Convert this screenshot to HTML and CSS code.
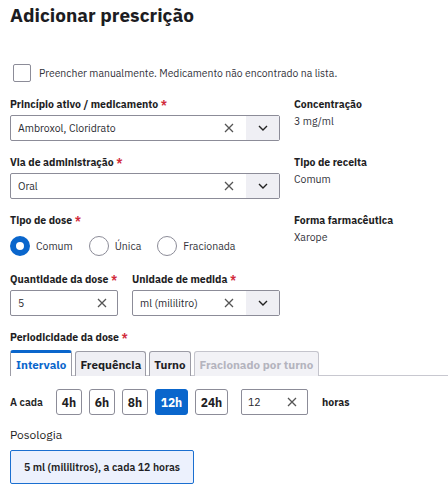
FILE: index.html
```html
<!DOCTYPE html>
<html lang="pt-BR">
<head>
<meta charset="utf-8">
<title>Adicionar prescrição</title>
<link rel="stylesheet" href="styles.css">
</head>
<body>
<div class="page">
  <h1 class="title">Adicionar prescrição</h1>

  <label class="check-row">
    <span class="checkbox"></span>
    <span class="check-text">Preencher manualmente. Medicamento não encontrado na lista.</span>
  </label>

  <div class="form-grid">
    <div class="field">
      <div class="label">Princípio ativo / medicamento <span class="req">*</span></div>
      <div class="input">
        <span class="input-text">Ambroxol, Cloridrato</span>
        <span class="clear"><svg viewBox="0 0 10 10" width="10" height="10"><path d="M1 1L9 9M9 1L1 9" stroke="#555" stroke-width="1.3" fill="none"/></svg></span>
        <span class="drop"><svg viewBox="0 0 10 6" width="10" height="6"><path d="M1 1L5 5L9 1" stroke="#222" stroke-width="1.4" fill="none"/></svg></span>
      </div>
    </div>
    <div class="info">
      <div class="label">Concentração</div>
      <div class="value">3 mg/ml</div>
    </div>

    <div class="field">
      <div class="label">Via de administração <span class="req">*</span></div>
      <div class="input">
        <span class="input-text">Oral</span>
        <span class="clear"><svg viewBox="0 0 10 10" width="10" height="10"><path d="M1 1L9 9M9 1L1 9" stroke="#555" stroke-width="1.3" fill="none"/></svg></span>
        <span class="drop"><svg viewBox="0 0 10 6" width="10" height="6"><path d="M1 1L5 5L9 1" stroke="#222" stroke-width="1.4" fill="none"/></svg></span>
      </div>
    </div>
    <div class="info">
      <div class="label">Tipo de receita</div>
      <div class="value">Comum</div>
    </div>

    <div class="field dose">
      <div class="label">Tipo de dose <span class="req">*</span></div>
      <div class="radios">
        <span class="radio-item"><span class="radio checked"></span>Comum</span>
        <span class="radio-item"><span class="radio"></span>Única</span>
        <span class="radio-item"><span class="radio"></span>Fracionada</span>
      </div>
    </div>
    <div class="info">
      <div class="label">Forma farmacêutica</div>
      <div class="value">Xarope</div>
    </div>

    <div class="field pair">
      <div class="sub qty">
        <div class="label">Quantidade da dose <span class="req">*</span></div>
        <div class="input">
          <span class="input-text">5</span>
          <span class="clear wide"><svg viewBox="0 0 10 10" width="10" height="10"><path d="M1 1L9 9M9 1L1 9" stroke="#555" stroke-width="1.3" fill="none"/></svg></span>
        </div>
      </div>
      <div class="sub unit">
        <div class="label">Unidade de medida <span class="req">*</span></div>
        <div class="input">
          <span class="input-text">ml (mililitro)</span>
          <span class="clear"><svg viewBox="0 0 10 10" width="10" height="10"><path d="M1 1L9 9M9 1L1 9" stroke="#555" stroke-width="1.3" fill="none"/></svg></span>
          <span class="drop"><svg viewBox="0 0 10 6" width="10" height="6"><path d="M1 1L5 5L9 1" stroke="#222" stroke-width="1.4" fill="none"/></svg></span>
        </div>
      </div>
    </div>
  </div>

  <div class="label period-label">Periodicidade da dose <span class="req">*</span></div>
  <div class="tabs">
    <span class="tab active">Intervalo</span>
    <span class="tab">Frequência</span>
    <span class="tab">Turno</span>
    <span class="tab disabled">Fracionado por turno</span>
  </div>

  <div class="interval-row">
    <span class="cada">A cada</span>
    <span class="hbtn">4h</span>
    <span class="hbtn">6h</span>
    <span class="hbtn">8h</span>
    <span class="hbtn wide active">12h</span>
    <span class="hbtn wide">24h</span>
    <div class="input hours">
      <span class="input-text">12</span>
      <span class="clear wide"><svg viewBox="0 0 10 10" width="10" height="10"><path d="M1 1L9 9M9 1L1 9" stroke="#555" stroke-width="1.3" fill="none"/></svg></span>
    </div>
    <span class="horas">horas</span>
  </div>

  <div class="poso-label">Posologia</div>
  <div class="poso-box">5 ml (mililitros), a cada 12 horas</div>
</div>
</body>
</html>
```

FILE: styles.css
```css
* { box-sizing: border-box; }
html, body { margin: 0; padding: 0; background: #fff; }
body {
  font-family: "IBM Plex Sans", "Noto Sans", "Open Sans", sans-serif;
  color: #1e1e24;
  overflow: hidden;
}
.page { padding: 0 0 0 10px; width: 448px; }

.title {
  margin: 0;
  font-size: 19px;
  font-weight: 700;
  line-height: 30px;
  color: #1c1c22;
}

.check-row {
  display: flex;
  align-items: center;
  gap: 8px;
  margin-top: 34px;
  margin-left: 3px;
  height: 18px;
}
.checkbox {
  width: 18px; height: 18px;
  border: 1px solid #8c8c98;
  border-radius: 2px;
  background: #fff;
  flex: none;
}
.check-text { font-size: 10.4px; color: #33333b; }

.form-grid {
  display: grid;
  grid-template-columns: 270px 1fr;
  column-gap: 14px;
  margin-top: 15px;
}
.field { padding-bottom: 14px; }
.field.dose { padding-bottom: 15px; }
.label {
  font-size: 10.5px;
  font-weight: 700;
  line-height: 14px;
  color: #1e1e24;
  white-space: nowrap;
}
.req { color: #d12a3a; }
.field .label { margin-bottom: 4px; }
.info .label { margin-bottom: 3px; }
.value { font-size: 10.5px; line-height: 14px; color: #33333b; }

.input {
  display: flex;
  align-items: center;
  height: 26px;
  border: 1px solid #8c8c98;
  border-radius: 2px;
  background: #fff;
}
.input-text {
  flex: 1;
  padding-left: 7px;
  font-size: 10.5px;
  color: #2a2a30;
  white-space: nowrap;
  overflow: hidden;
}
.clear {
  width: 22px;
  display: flex; align-items: center; justify-content: flex-start;
}
.clear.wide { width: 20px; }
.drop {
  width: 33px;
  align-self: stretch;
  background: #efeff4;
  display: flex; align-items: center; justify-content: center;
}

.radios {
  display: flex;
  align-items: center;
  height: 22px;
  margin-top: 8px;
}
.radio-item {
  display: inline-flex;
  align-items: center;
  gap: 6px;
  font-size: 10.5px;
  color: #33333b;
  margin-right: 16px;
}
.radio {
  width: 20px; height: 20px;
  border-radius: 50%;
  border: 1.2px solid #8c8c98;
  background: #fff;
  flex: none;
}
.radio.checked { border: 6px solid #0a66cc; }

.pair { display: flex; gap: 14px; }
.qty { width: 108px; }
.unit { width: 148px; }

.period-label { margin-top: 0; }
.tabs {
  display: flex;
  gap: 3px;
  margin-top: 6px;
  border-bottom: 1px solid #c8c8d0;
  height: 26px;
  align-items: flex-end;
}
.tab {
  height: 25px;
  padding: 0 4px;
  display: flex; align-items: center;
  font-size: 11.6px;
  font-weight: 700;
  color: #1e1e24;
  background: #efeff4;
  border: 1px solid #9c9ca6;
  border-bottom: none;
  border-radius: 3px 3px 0 0;
  margin-bottom: -1px;
}
.tab.active {
  background: #fff;
  color: #0a66cc;
  border-top: 3px solid #0a66cc;
  height: 26px;
  padding: 0 5px;
}
.tab.disabled { color: #b4b4be; background: #f2f2f6; border-color: #c4c4cc; padding: 0 5px; }

.interval-row {
  display: flex;
  align-items: center;
  margin-top: 13px;
  height: 26px;
}
.cada { font-size: 10.5px; font-weight: 600; color: #1e1e24; width: 46px; }
.hbtn {
  width: 26px; height: 26px;
  border: 1px solid #8c8c98;
  border-radius: 3px;
  display: flex; align-items: center; justify-content: center;
  font-size: 12px;
  font-weight: 700;
  color: #1e1e24;
  margin-right: 7px;
  background: #fff;
}
.hbtn.wide { width: 33px; }
.hbtn.active { background: #0a66cc; border-color: #0a66cc; color: #fff; }
.input.hours { width: 67px; margin-left: 6px; }
.input.hours .input-text { padding-left: 6px; }
.horas { font-size: 10.5px; font-weight: 700; margin-left: 14px; color: #1e1e24; }

.poso-label {
  margin-top: 12px;
  font-size: 12px;
  line-height: 16px;
  color: #1e1e24;
}
.poso-box {
  margin-top: 7px;
  width: 184px;
  height: 34px;
  border: 1px solid #1a6fd0;
  border-radius: 2px;
  background: #ecf1fd;
  display: flex; align-items: center; justify-content: center;
  font-size: 10.5px;
  font-weight: 600;
  color: #1e1e24;
}
```
